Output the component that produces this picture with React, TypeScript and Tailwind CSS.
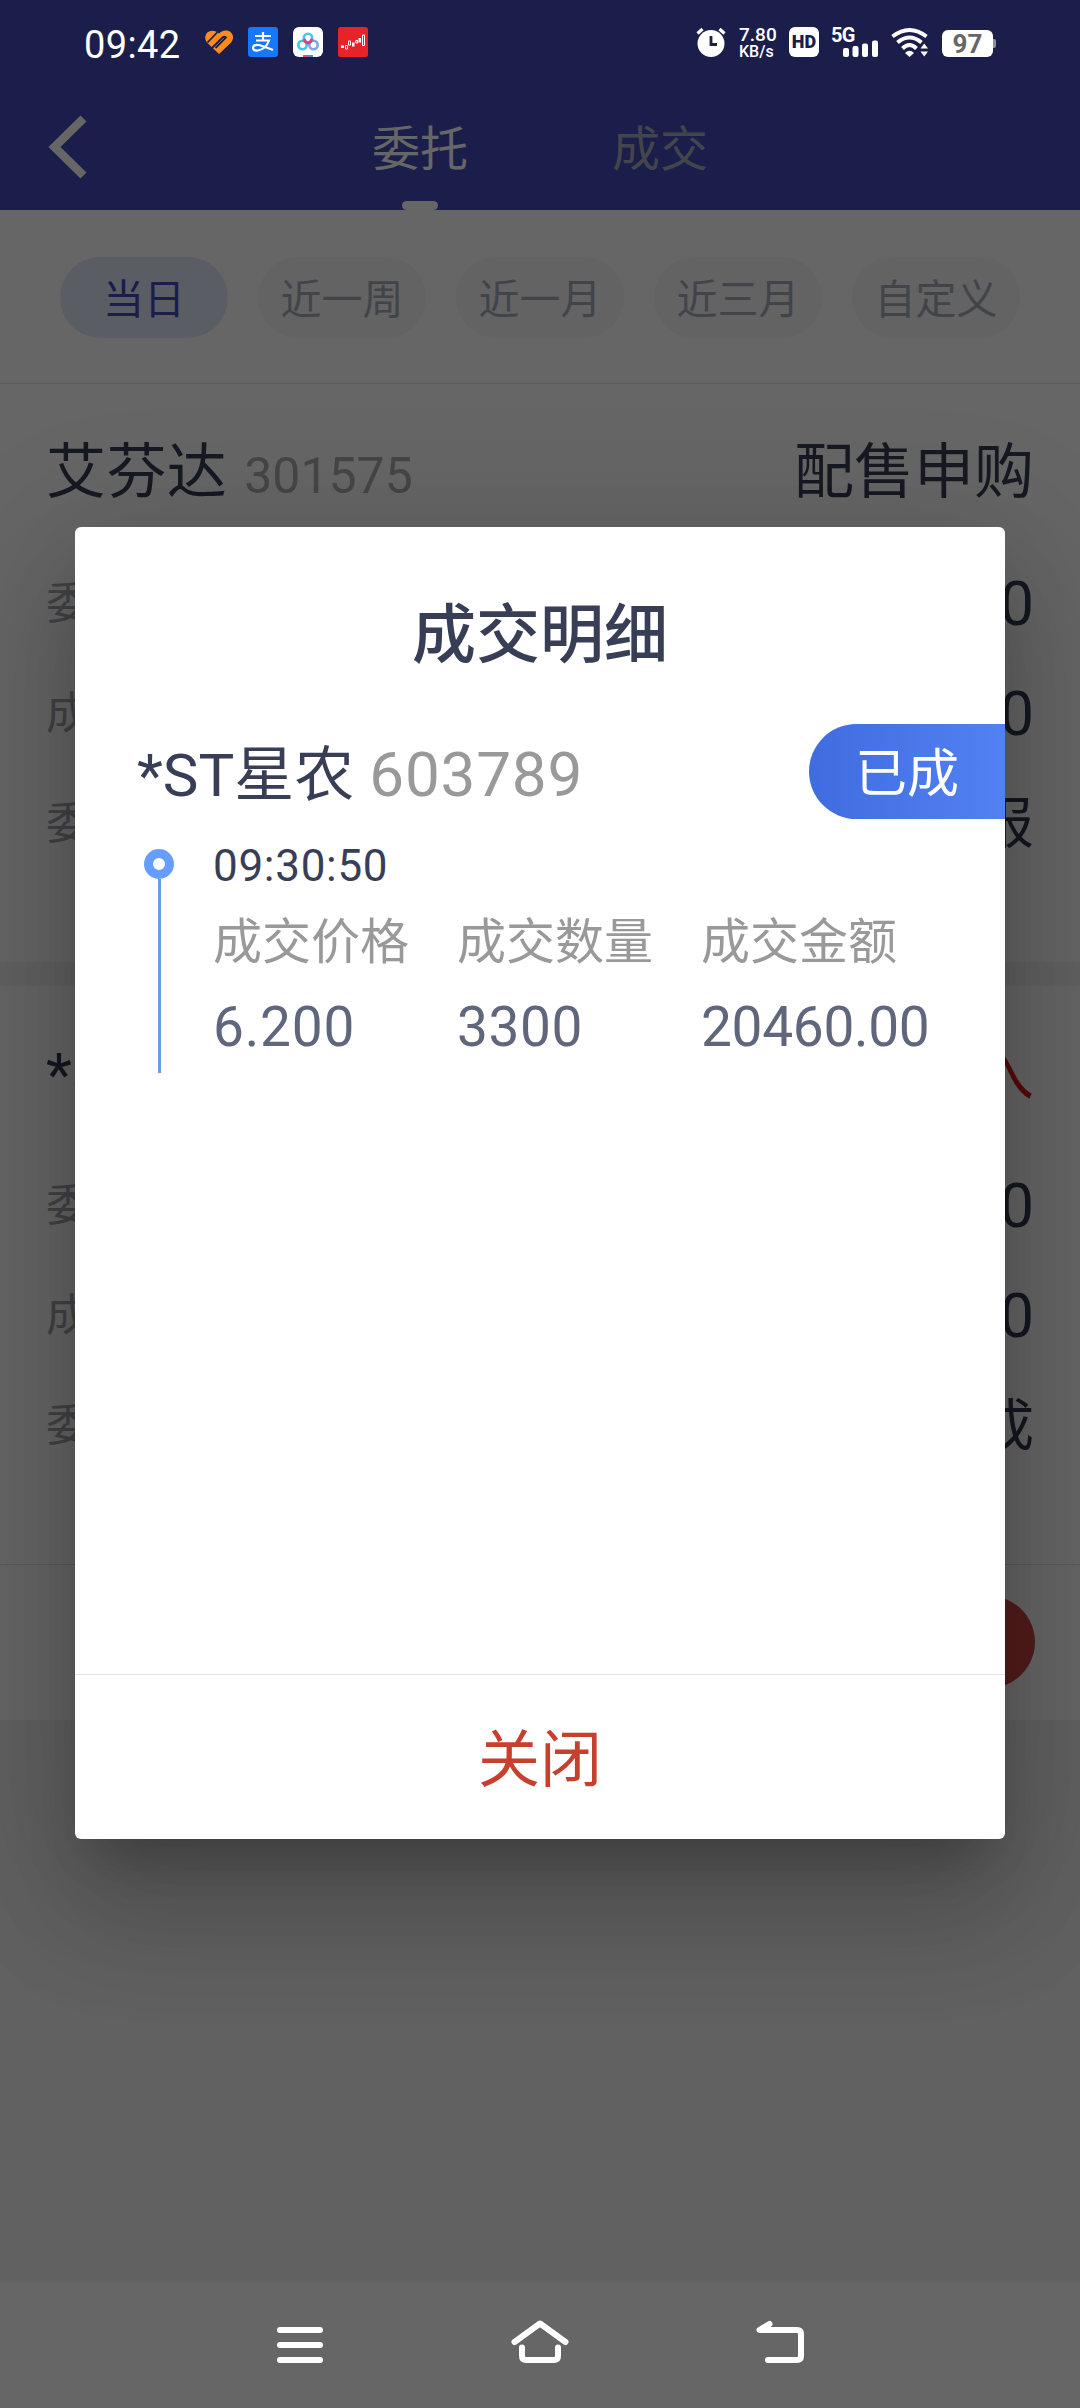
import { clsx } from "clsx";

interface OrderRow {
  label: string;
  value: string;
}

interface Order {
  name: string;
  code: string;
  side: string;
  sideColor: string;
  rows: OrderRow[];
}

const RANGES = ["当日", "近一周", "近一月", "近三月", "自定义"];

const ORDERS: Order[] = [
  {
    name: "艾芬达",
    code: "301575",
    side: "配售申购",
    sideColor: "text-[#383e56]",
    rows: [
      { label: "委托价格", value: "0.000" },
      { label: "成交数量", value: "0" },
      { label: "委托状态", value: "已报" },
    ],
  },
  {
    name: "*ST星农",
    code: "603789",
    side: "买入",
    sideColor: "text-[#dc1a1a]",
    rows: [
      { label: "委托价格", value: "6.200" },
      { label: "成交数量", value: "3300" },
      { label: "委托状态", value: "已成" },
    ],
  },
];

const DEAL = [
  { label: "成交价格", value: "6.200", tracking: "tracking-[0.8px]" },
  { label: "成交数量", value: "3300", tracking: "tracking-[0.6px]" },
  { label: "成交金额", value: "20460.00", tracking: "tracking-[-0.3px]" },
];

function AppIcons() {
  return (
    <div className="flex items-center">
      <svg className="ml-[23px]" width="30" height="30" viewBox="0 0 30 30" fill="none">
        <path d="M15 6.500 C11 2.500 5 3 2.500 6.500 C0 10.500 1.500 14 4 16.500 L15 27 L27 15.500 C30 12 29.500 8 27 5.500 C23.500 2.500 18.500 3 15 6.500z" fill="#ff8a1f" />
        <path d="M14.500 4 L3.500 15.500M8 21 L18.500 10.500 Q20.500 9 22 10.500 L11.500 21" stroke="#1b1e4a" strokeWidth="1.800" />
      </svg>
      <svg className="ml-[14px]" width="30" height="30" viewBox="0 0 30 30" fill="none">
        <rect width="30" height="30" rx="3" fill="#1677ff" />
        <path d="M7 9h16M15 5v8M8 13.500h13Q18 22 10 23.500Q5 24 5 20.500Q6 17 11 18Q18 20 25 23" stroke="#fff" strokeWidth="2.200" />
      </svg>
      <svg className="ml-[15px]" width="30" height="30" viewBox="0 0 30 30" fill="none">
        <rect width="30" height="30" rx="6" fill="#fff" />
        <circle cx="15" cy="11" r="4.200" stroke="#4cc3f0" strokeWidth="2.600" />
        <circle cx="9.500" cy="18" r="4.200" stroke="#3fc8e4" strokeWidth="2.600" />
        <circle cx="20.500" cy="18" r="4.200" stroke="#7aa6f0" strokeWidth="2.600" />
        <path d="M10.800 12 Q15 20 19.200 12" stroke="#e0407c" strokeWidth="2.800" />
        <path d="M10 28h5v2h-5z" fill="#e0506c" />
        <path d="M15 28h5v2h-5z" fill="#4a8ad8" />
      </svg>
      <svg className="ml-[15px]" width="30" height="30" viewBox="0 0 30 30" fill="none">
        <rect width="30" height="30" rx="2.500" fill="#e62328" />
        <path d="M3 18.500h3v2.500H3zM14 15.500h2.500v4H14zM20.500 11h2.500v4.500h-2.500z" fill="#fff" />
        <path d="M7.500 18.500h2v3.500h-2zM10.500 14h2v4h-2zM17.800 13.500h1.800v2.500h-1.800zM24.500 8h2v10.500h-2z" stroke="#fff" />
      </svg>
    </div>
  );
}

function StatusBar() {
  return (
    <div className="flex h-[84px] shrink-0 items-center pl-[84px] pr-[84px] text-white">
      <span className="pt-[6px] font-[Roboto] text-[38px] leading-none tracking-[0.4px]">09:42</span>
      <AppIcons />
      <div className="ml-auto flex items-center">
        <svg width="30" height="30" viewBox="0 0 30 30" fill="none">
          <circle cx="15" cy="16.500" r="13.500" fill="#fff" />
          <path d="M1.500 6.500 L6.500 2M28.500 6.500 L23.500 2" stroke="#fff" strokeWidth="3.200" />
          <path d="M15 9v8.500h6" stroke="#1b1e4a" strokeWidth="2.800" />
        </svg>
        <div className="ml-[13px] flex w-[38px] flex-col font-[Roboto] font-medium">
          <span className="text-[19px] leading-[19px]">7.80</span>
          <span className="text-[16px] leading-[16px]">KB/s</span>
        </div>
        <div className="ml-[12px] flex h-[30px] w-[30px] items-center justify-center rounded-[6px] bg-white font-[Roboto] text-[18px] font-black leading-none text-[#1b1e4a]">
          HD
        </div>
        <div className="relative ml-[12px] h-[30px] w-[48px]">
          <span className="absolute -top-px left-0 font-[Roboto] text-[20px] font-bold leading-[18px] tracking-[-0.8px]">5G</span>
          <svg className="absolute inset-0" width="48" height="30" viewBox="0 0 48 30" fill="#fff">
            <rect x="12" y="21" width="6" height="9" rx="2" />
            <rect x="21.500" y="19" width="6" height="11" rx="2" />
            <rect x="31" y="16.500" width="6" height="13.500" rx="2" />
            <rect x="41" y="13.500" width="6" height="16.500" rx="2" />
          </svg>
        </div>
        <svg className="ml-[12px]" width="38" height="30" viewBox="0 0 38 30" fill="none" stroke="#fff" strokeWidth="4">
          <path d="M1.500 9.500 Q18.500 -3.500 35.500 9.500" />
          <path d="M6.500 15.500 Q18.500 5.500 30.500 15.500" />
          <path d="M11.500 21.500 Q18.500 14.500 25.500 21.500" />
          <path d="M14 26 Q18.500 21.500 23 26 L18.500 30z" fill="#fff" stroke="none" />
          <path d="M29.500 21.500 L33.200 16.500 L37 21.500zM29.500 24.500h7.500L33.200 29.500z" fill="#fff" stroke="none" />
        </svg>
        <div className="ml-[13px] mt-[3px] flex items-center">
          <div className="flex h-[27px] w-[51px] items-center justify-center rounded-[6px] bg-white pt-px font-[Roboto] text-[26px] font-bold leading-none text-[#666]">
            97
          </div>
          <div className="h-[9px] w-[3px] rounded-r-[2px] bg-[#8d8fa5]" />
        </div>
      </div>
    </div>
  );
}

function NavBar() {
  return (
    <div className="flex h-[126px] shrink-0 items-start justify-center pt-[30px]">
      <svg width="540" height="60" viewBox="270 2312 540 60" fill="none" stroke="#fff" strokeWidth="6" strokeLinecap="round" strokeLinejoin="round">
        <path d="M280 2330h40M280 2345h40M280 2360h40" />
        <path d="M514.500 2342 L540 2323.500 L565.500 2342" />
        <path d="M522 2347.500v8.500q0 4 4 4h28q4 0 4-4v-8.500" />
        <path d="M769.500 2324 L759.500 2330H797q4 0 4 4v22q0 4-4 4H768" />
      </svg>
    </div>
  );
}

function Header() {
  return (
    <div className="flex h-[210px] flex-col bg-[#444bb9] pt-[84px]">
      <div className="grid h-[126px] grid-cols-[300px_240px_240px_300px]">
        <svg className="ml-[48px] mt-[31px]" width="40" height="64" viewBox="0 0 40 64" fill="none">
          <path d="M35.500 3.500 L6.500 32 L35.500 60.500" stroke="#fff" strokeWidth="8.500" />
        </svg>
        <div className="flex flex-col items-center justify-between pt-[32px] text-[48px] leading-[68px] text-white">
          <span>委托</span>
          <span className="h-[9px] w-[36px] rounded-[5px] bg-white" />
        </div>
        <div className="pt-[32px] text-center text-[48px] leading-[68px] text-[#a5adbe]">成交</div>
      </div>
    </div>
  );
}

function RangeTabs() {
  return (
    <div className="flex h-[174px] gap-[30px] border-b border-[#dedede] px-[60px] pt-[47px]">
      {RANGES.map((range, idx) => (
        <div
          key={range}
          className={clsx(
            "flex h-[81px] w-[168px] items-center justify-center rounded-full pt-[5px] text-[41px] leading-none",
            idx === 0 ? "bg-[#e3e9fb] text-[#444bb9]" : "bg-[#f7f7fa] text-[#a3adb8]"
          )}
        >
          {range}
        </div>
      ))}
    </div>
  );
}

function OrderCard({ order }: { order: Order }) {
  return (
    <div className="px-[46px] pt-[44px] text-[#383e56]">
      <div className="flex h-[90px] items-center justify-between text-[60px] leading-none">
        <div className="flex items-baseline gap-[17px]">
          <span className="tracking-[0.4px]">{order.name}</span>
          <span className="text-[50px] text-[#b0b0b5]">{order.code}</span>
        </div>
        <span className={order.sideColor}>{order.side}</span>
      </div>
      <div className="mt-[30px]">
        {order.rows.map((row) => (
          <div key={row.label} className="flex h-[110px] items-center justify-between pt-[2px] leading-none">
            <span className="text-[44px] text-[#a6a7ae]">{row.label}</span>
            <span className={/^[\d.]+$/.test(row.value) ? "text-[61px]" : "text-[56px]"}>{row.value}</span>
          </div>
        ))}
      </div>
    </div>
  );
}

function DealDialog() {
  return (
    <div className="mx-[75px] mt-[443px] flex h-[1312px] shrink-0 flex-col rounded-[6px] bg-white shadow-[0_33px_45px_-21px_rgba(0,0,0,0.2),0_72px_114px_9px_rgba(0,0,0,0.14),0_27px_138px_24px_rgba(0,0,0,0.12)]">
      <h2 className="pt-[67px] text-center text-[64px] font-medium leading-[84px] text-[#383e56]">成交明细</h2>
      <div className="mt-[46px] flex h-[95px] items-center justify-between pl-[62px]">
        <div className="flex items-baseline gap-[15px] pt-[6px] text-[60px] leading-none">
          <span className="text-[#383e56]">*ST星农</span>
          <span className="text-[62px] tracking-[0.8px] text-[#999]">603789</span>
        </div>
        <div className="flex h-full w-[196px] items-center rounded-l-full bg-linear-to-r from-[#3f6de0] to-[#5281f4] pl-[46px] pt-[6px] text-[52px] leading-none text-white">
          已成
        </div>
      </div>
      <div className="flex pl-[69px]">
        <div className="flex w-[30px] flex-col items-center pt-[30px]">
          <div className="h-[30px] w-[30px] rounded-full border-[9px] border-[#669eff] bg-white" />
          <div className="h-[194px] w-[3px] bg-[#6a9ce4]" />
        </div>
        <div className="ml-[39px] pt-[17px]">
          <div className="text-[44px] leading-[60px] tracking-[0.7px] text-[#383e56]">09:30:50</div>
          <div className="grid grid-cols-[244px_244px_244px] pt-[11px]">
            {DEAL.map((item) => (
              <div key={item.label}>
                <div className="text-[49px] leading-[72px] text-[#999]">{item.label}</div>
                <div className={clsx("pt-[6px] text-[55px] leading-[84px] text-[#60667c]", item.tracking)}>{item.value}</div>
              </div>
            ))}
          </div>
        </div>
      </div>
      <button className="mt-auto h-[165px] border-t border-[#e3e3e3] pt-[8px] text-[62px] leading-none text-[#c93f2e]">关闭</button>
    </div>
  );
}

export default function App() {
  return (
    <div className="relative h-[2408px] w-[1080px] overflow-hidden bg-[#f2f2f2] font-[Roboto,'Noto_Sans_CJK_SC',sans-serif]">
      <div className="flex h-full flex-col">
        <Header />
        <div className="bg-white">
          <RangeTabs />
          <div className="h-[578px]">
            <OrderCard order={ORDERS[0]} />
          </div>
          <div className="h-[24px] bg-[#f2f2f2]" />
          <div className="h-[579px] border-b border-[#dedede]">
            <OrderCard order={ORDERS[1]} />
          </div>
          <div className="flex h-[155px] justify-end pr-[45px] pt-[31px]">
            <div className="h-[92px] w-[240px] rounded-full bg-[#d04a45]" />
          </div>
        </div>
        <div className="mt-auto h-[126px] bg-white" />
      </div>

      {/* Dimmed layer with the dialog and system bars */}
      <div className="absolute inset-0 flex flex-col justify-between bg-black/60">
        <StatusBar />
        <DealDialog />
        <div className="flex-1" />
        <NavBar />
      </div>
    </div>
  );
}
